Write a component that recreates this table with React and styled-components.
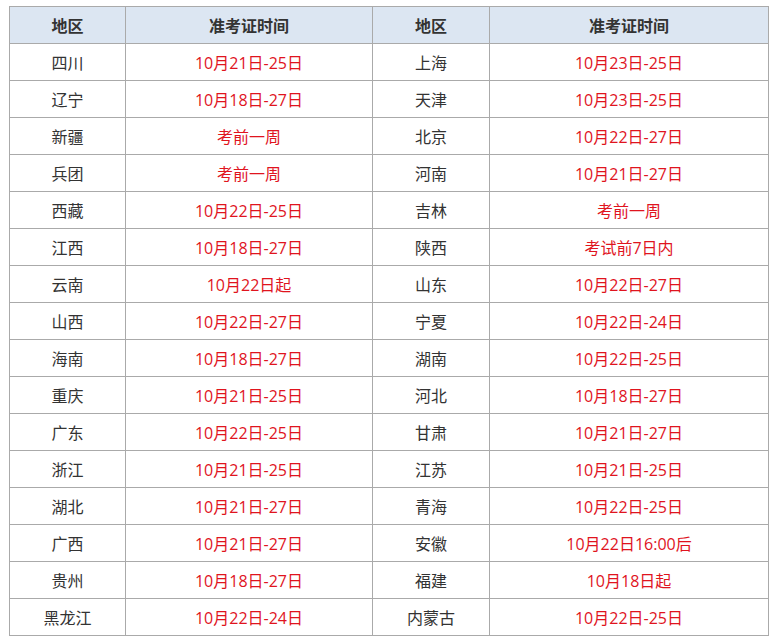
import React from "react";
import styled, { createGlobalStyle } from "styled-components";

const GlobalStyle = createGlobalStyle`
  body {
    margin: 0;
    background: #fff;
    font-family: "Open Sans", "Noto Sans CJK SC", sans-serif;
  }
`;

const Wrap = styled.div`
  padding: 6px 0 0 9px;
`;

const Table = styled.table`
  border-collapse: collapse;
  table-layout: fixed;
  width: 759px;
  font-size: 16px;
`;

const Th = styled.th`
  height: 36px;
  padding: 0;
  border: 1px solid #aaaaaa;
  background: #dce6f2;
  color: #333;
  font-weight: bold;
  text-align: center;
`;

const Td = styled.td`
  height: 36px;
  padding: 0;
  border: 1px solid #aaaaaa;
  text-align: center;
  color: ${(p) => (p.$red ? "#e0141e" : "#333")};
`;

const rows = [
  ["四川", "10月21日-25日", "上海", "10月23日-25日"],
  ["辽宁", "10月18日-27日", "天津", "10月23日-25日"],
  ["新疆", "考前一周", "北京", "10月22日-27日"],
  ["兵团", "考前一周", "河南", "10月21日-27日"],
  ["西藏", "10月22日-25日", "吉林", "考前一周"],
  ["江西", "10月18日-27日", "陕西", "考试前7日内"],
  ["云南", "10月22日起", "山东", "10月22日-27日"],
  ["山西", "10月22日-27日", "宁夏", "10月22日-24日"],
  ["海南", "10月18日-27日", "湖南", "10月22日-25日"],
  ["重庆", "10月21日-25日", "河北", "10月18日-27日"],
  ["广东", "10月22日-25日", "甘肃", "10月21日-27日"],
  ["浙江", "10月21日-25日", "江苏", "10月21日-25日"],
  ["湖北", "10月21日-27日", "青海", "10月22日-25日"],
  ["广西", "10月21日-27日", "安徽", "10月22日16:00后"],
  ["贵州", "10月18日-27日", "福建", "10月18日起"],
  ["黑龙江", "10月22日-24日", "内蒙古", "10月22日-25日"],
];

export default function App() {
  return (
    <Wrap>
      <GlobalStyle />
      <Table>
        <colgroup>
          <col style={{ width: 116 }} />
          <col style={{ width: 247 }} />
          <col style={{ width: 117 }} />
          <col style={{ width: 279 }} />
        </colgroup>
        <thead>
          <tr>
            <Th>地区</Th>
            <Th>准考证时间</Th>
            <Th>地区</Th>
            <Th>准考证时间</Th>
          </tr>
        </thead>
        <tbody>
          {rows.map((r) => (
            <tr key={r[0]}>
              <Td>{r[0]}</Td>
              <Td $red>{r[1]}</Td>
              <Td>{r[2]}</Td>
              <Td $red>{r[3]}</Td>
            </tr>
          ))}
        </tbody>
      </Table>
    </Wrap>
  );
}
